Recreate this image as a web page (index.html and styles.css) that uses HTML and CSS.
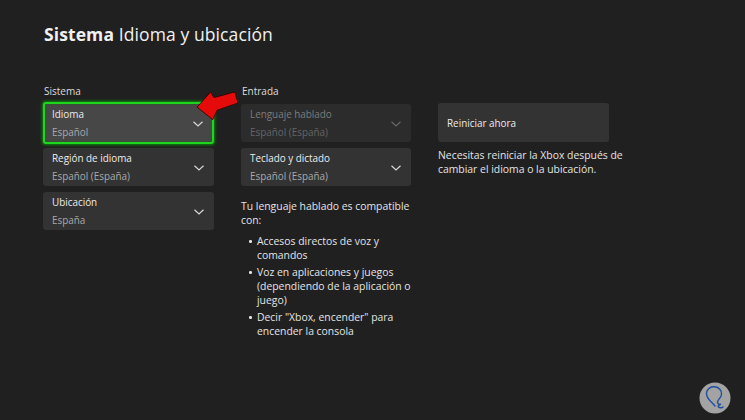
FILE: index.html
```html
<!DOCTYPE html>
<html lang="es">
<head>
<meta charset="utf-8">
<title>Sistema Idioma y ubicación</title>
<link rel="stylesheet" href="styles.css">
</head>
<body>
<div class="screen">
  <h1 class="title"><b>Sistema</b> Idioma y ubicación</h1>
  <div class="columns">
    <section class="col">
      <div class="label">Sistema</div>
      <div class="card focused">
        <div class="txt"><div class="name">Idioma</div><div class="val">Español</div></div>
        <svg class="chev" viewBox="0 0 10 6"><path d="M0.5 0.8 L5 5 L9.5 0.8"/></svg>
      </div>
      <div class="card">
        <div class="txt"><div class="name">Región de idioma</div><div class="val">Español (España)</div></div>
        <svg class="chev" viewBox="0 0 10 6"><path d="M0.5 0.8 L5 5 L9.5 0.8"/></svg>
      </div>
      <div class="card">
        <div class="txt"><div class="name">Ubicación</div><div class="val">España</div></div>
        <svg class="chev" viewBox="0 0 10 6"><path d="M0.5 0.8 L5 5 L9.5 0.8"/></svg>
      </div>
    </section>
    <section class="col">
      <div class="label">Entrada</div>
      <div class="card disabled">
        <div class="txt"><div class="name">Lenguaje hablado</div><div class="val">Español (España)</div></div>
        <svg class="chev" viewBox="0 0 10 6"><path d="M0.5 0.8 L5 5 L9.5 0.8"/></svg>
      </div>
      <div class="card">
        <div class="txt"><div class="name">Teclado y dictado</div><div class="val">Español (España)</div></div>
        <svg class="chev" viewBox="0 0 10 6"><path d="M0.5 0.8 L5 5 L9.5 0.8"/></svg>
      </div>
      <p class="info">Tu lenguaje hablado es compatible con:</p>
      <ul class="list">
        <li>Accesos directos de voz y comandos</li>
        <li>Voz en aplicaciones y juegos (dependiendo de la aplicación o juego)</li>
        <li>Decir "Xbox, encender" para encender la consola</li>
      </ul>
    </section>
    <section class="col">
      <div class="label">&nbsp;</div>
      <div class="card button"><div class="name">Reiniciar ahora</div></div>
      <p class="info note">Necesitas reiniciar la Xbox después de cambiar el idioma o la ubicación.</p>
    </section>
  </div>
  <svg class="arrow" viewBox="0 0 42 30">
    <polygon points="2,17 15,2.5 18,8 38,2.5 41,13 21,20 17,29" />
  </svg>
  <svg class="watermark" viewBox="0 0 32 32">
    <circle cx="16" cy="16" r="15.5" fill="#a3a3a3"/>
    <path d="M16 24 C13 20 7 17 7.5 11 C8 6.5 12 4.5 15.5 4.8 C20 5.2 23 8.5 22.5 12.5 C22 16 19 17 18.5 20 C18.3 22 20 22.5 21.5 22.3 C19.5 23.5 18 24.5 20.5 25.5 C22 26 23.5 25.5 24 25" fill="none" stroke="#1f4fa0" stroke-width="1.4" stroke-linecap="round" stroke-linejoin="round"/>
  </svg>
</div>
</body>
</html>
```
FILE: styles.css
```css
* { box-sizing: border-box; }
html, body { margin: 0; padding: 0; }
body {
  background: #202020;
  font-family: "Open Sans", "Noto Sans", sans-serif;
  color: #e8e8e8;
  width: 745px;
  height: 420px;
  overflow: hidden;
}
.screen {
  position: relative;
  width: 745px;
  height: 420px;
  padding: 21px 0 0 43px;
}
.title {
  margin: 0 0 0 1px;
  font-size: 17.5px;
  font-weight: 400;
  line-height: 26px;
  color: #f0f0f0;
  letter-spacing: 0.1px;
}
.title b { font-weight: 700; }
.columns {
  display: grid;
  grid-template-columns: 171px 170px 171px;
  column-gap: 27px;
  margin-top: 37px;
}
.label {
  font-size: 10px;
  line-height: 14px;
  color: #dcdcdc;
  margin: 0 0 6px 1px;
}
.card {
  position: relative;
  height: 38px;
  background: #333333;
  border-radius: 3px;
  margin-bottom: 6px;
  display: flex;
  align-items: center;
  padding-left: 9px;
}
.txt { display: flex; flex-direction: column; gap: 4px; }
.name { font-size: 9.9px; line-height: 14px; color: #ececec; }
.val { font-size: 9.9px; line-height: 14px; color: #a9a9a9; }
.chev {
  position: absolute;
  right: 10px;
  top: 17px;
  width: 10px;
  height: 6px;
  fill: none;
  stroke: #d8d8d8;
  stroke-width: 1.2;
}
.focused {
  height: 42px;
  margin-top: -2px;
  margin-bottom: 4px;
  background: #474747;
  border: 2px solid #1ed61e;
  box-shadow: 0 0 3px 1px #0c8a0c, inset 0 0 2px #0c6a0c;
  padding-left: 7px;
}
.focused .chev { right: 9px; top: 17px; }
.disabled { background: #2c2c2c; }
.disabled .name { color: #7c7c7c; }
.disabled .val { color: #656565; }
.disabled .chev { stroke: #666; }
.button { height: 39px; margin-top: -1px; }
.info {
  margin: 13px 0 0 0;
  font-size: 10.4px;
  line-height: 14px;
  color: #e4e4e4;
}
.note { margin-top: 6px; width: 185px; }
.list {
  list-style: none;
  margin: 7px 0 0 0;
  padding: 0 0 0 16px;
  font-size: 10.4px;
  line-height: 14px;
  color: #e4e4e4;
}
.list li { position: relative; margin-bottom: 3px; }
.list li::before {
  content: "";
  position: absolute;
  left: -8px;
  top: 6px;
  width: 2.5px;
  height: 2.5px;
  border-radius: 50%;
  background: #e4e4e4;
}
.arrow {
  position: absolute;
  left: 195px;
  top: 89px;
  width: 44px;
  height: 32px;
  fill: #e60b0b;
  stroke: #300000;
  stroke-width: 0.8;
}
.watermark {
  position: absolute;
  left: 699px;
  top: 382px;
  width: 32px;
  height: 32px;
}
```
